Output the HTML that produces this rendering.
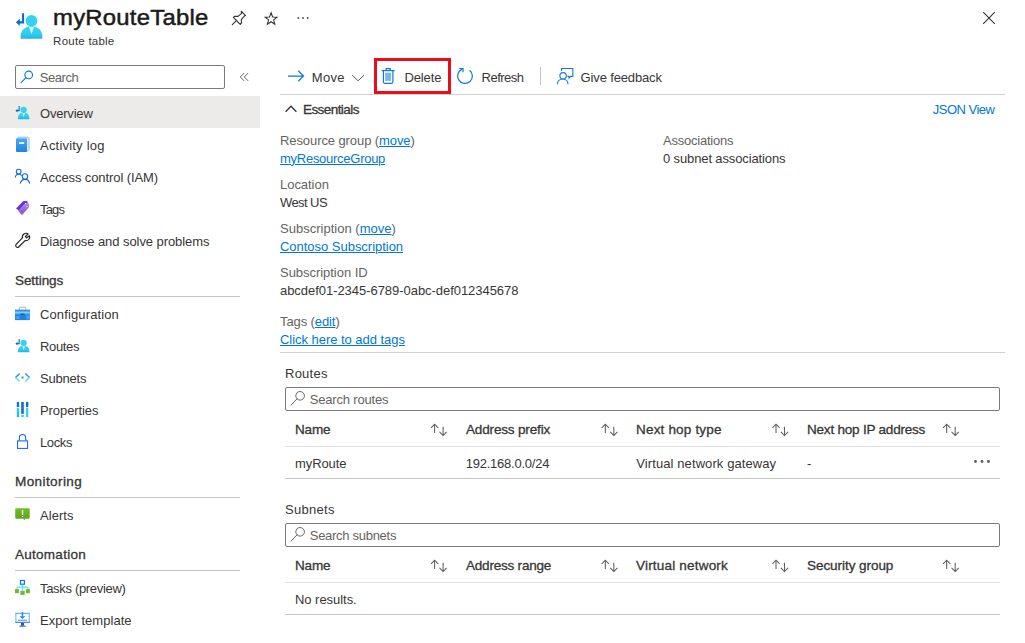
<!DOCTYPE html><html lang="en"><head><meta charset="utf-8"><title>myRouteTable - Route table</title><style>

html,body{margin:0;padding:0;}
body{width:1025px;height:643px;position:relative;overflow:hidden;background:#fff;font-family:"Liberation Sans", sans-serif;color:#373635;}
.t{position:absolute;white-space:nowrap;line-height:1;margin:0;}
.u{color:#0078d4;text-decoration:underline;text-underline-offset:1px;}
.b{position:absolute;box-sizing:border-box;}
svg{position:absolute;overflow:visible;}

</style></head><body>
<div class="b" style="left:0;top:96px;width:260px;height:32px;background:#edebe9"></div>
<div class="b" style="left:15px;top:65px;width:210px;height:24px;border:1px solid #7d7b79;border-radius:2px;background:#fff"></div>
<div class="b" style="left:15px;top:296px;width:225px;height:1px;background:#c8c6c4"></div>
<div class="b" style="left:15px;top:497px;width:225px;height:1px;background:#c8c6c4"></div>
<div class="b" style="left:15px;top:570px;width:225px;height:1px;background:#c8c6c4"></div>
<div class="b" style="left:280px;top:94px;width:725px;height:1px;background:#d2d0ce"></div>
<div class="b" style="left:540px;top:67px;width:1px;height:18px;background:#c8c6c4"></div>
<div class="b" style="left:374px;top:58px;width:77px;height:36px;border:3px solid #e60f1b"></div>
<div class="b" style="left:280px;top:352px;width:725px;height:1px;background:#d2d0ce"></div>
<div class="b" style="left:285px;top:387px;width:715px;height:24px;border:1px solid #7d7b79;border-radius:2px"></div>
<div class="b" style="left:285px;top:446px;width:715px;height:1px;background:#e1dfdd"></div>
<div class="b" style="left:285px;top:478px;width:715px;height:1px;background:#c8c6c4"></div>
<div class="b" style="left:285px;top:523px;width:715px;height:24px;border:1px solid #7d7b79;border-radius:2px"></div>
<div class="b" style="left:285px;top:582px;width:715px;height:1px;background:#e1dfdd"></div>
<div class="b" style="left:285px;top:614px;width:715px;height:1px;background:#c8c6c4"></div>

<div class="t" style="left:52.50px;top:6.75px;font-size:22.5px;font-weight:400;color:#1b1a19;letter-spacing:0.250px;-webkit-text-stroke:0.49px #1b1a19;transform:scaleX(1.06);transform-origin:0 0;">myRouteTable</div>
<div class="t" style="left:53.10px;top:35.97px;font-size:11.5px;font-weight:400;color:#373635;letter-spacing:0.235px;">Route table</div>
<div class="t" style="left:39.80px;top:70.80px;font-size:13px;font-weight:400;color:#656361;letter-spacing:-0.470px;">Search</div>
<div class="t" style="left:40.00px;top:106.90px;font-size:13px;font-weight:400;color:#373635;letter-spacing:-0.200px;">Overview</div>
<div class="t" style="left:40.00px;top:138.90px;font-size:13px;font-weight:400;color:#373635;letter-spacing:0.205px;">Activity log</div>
<div class="t" style="left:40.00px;top:170.90px;font-size:13px;font-weight:400;color:#373635;letter-spacing:-0.097px;">Access control (IAM)</div>
<div class="t" style="left:40.00px;top:202.90px;font-size:13px;font-weight:400;color:#373635;letter-spacing:-0.850px;">Tags</div>
<div class="t" style="left:40.00px;top:234.90px;font-size:13px;font-weight:400;color:#373635;letter-spacing:-0.067px;">Diagnose and solve problems</div>
<div class="t" style="left:40.00px;top:307.90px;font-size:13px;font-weight:400;color:#373635;letter-spacing:0.125px;">Configuration</div>
<div class="t" style="left:40.00px;top:339.90px;font-size:13px;font-weight:400;color:#373635;letter-spacing:-0.350px;">Routes</div>
<div class="t" style="left:40.00px;top:371.90px;font-size:13px;font-weight:400;color:#373635;letter-spacing:-0.208px;">Subnets</div>
<div class="t" style="left:40.00px;top:403.90px;font-size:13px;font-weight:400;color:#373635;letter-spacing:-0.083px;">Properties</div>
<div class="t" style="left:40.00px;top:435.90px;font-size:13px;font-weight:400;color:#373635;letter-spacing:-0.375px;">Locks</div>
<div class="t" style="left:40.00px;top:508.90px;font-size:13px;font-weight:400;color:#373635;letter-spacing:0.050px;">Alerts</div>
<div class="t" style="left:40.00px;top:581.90px;font-size:13px;font-weight:400;color:#373635;letter-spacing:-0.321px;">Tasks (preview)</div>
<div class="t" style="left:40.00px;top:613.90px;font-size:13px;font-weight:400;color:#373635;letter-spacing:0.036px;">Export template</div>
<div class="t" style="left:15.00px;top:273.80px;font-size:13px;font-weight:400;color:#373635;letter-spacing:-0.079px;-webkit-text-stroke:0.29px #373635;transform:scaleX(1.04);transform-origin:0 0;">Settings</div>
<div class="t" style="left:15.00px;top:474.80px;font-size:13px;font-weight:400;color:#373635;letter-spacing:0.389px;-webkit-text-stroke:0.29px #373635;transform:scaleX(1.04);transform-origin:0 0;">Monitoring</div>
<div class="t" style="left:15.00px;top:547.80px;font-size:13px;font-weight:400;color:#373635;letter-spacing:0.250px;-webkit-text-stroke:0.29px #373635;transform:scaleX(1.04);transform-origin:0 0;">Automation</div>
<div class="t" style="left:311.80px;top:70.60px;font-size:13px;font-weight:400;color:#373635;letter-spacing:0.317px;">Move</div>
<div class="t" style="left:404.40px;top:70.60px;font-size:13px;font-weight:400;color:#373635;letter-spacing:-0.120px;">Delete</div>
<div class="t" style="left:481.60px;top:70.60px;font-size:13px;font-weight:400;color:#373635;letter-spacing:-0.517px;">Refresh</div>
<div class="t" style="left:580.60px;top:70.60px;font-size:13px;font-weight:400;color:#373635;letter-spacing:-0.146px;">Give feedback</div>
<div class="t" style="left:302.80px;top:102.70px;font-size:13px;font-weight:400;color:#373635;letter-spacing:-0.556px;-webkit-text-stroke:0.29px #373635;transform:scaleX(1.04);transform-origin:0 0;">Essentials</div>
<div class="t" style="left:932.75px;top:102.70px;font-size:13px;font-weight:400;color:#0078d4;letter-spacing:-0.500px;">JSON View</div>
<div class="t" style="left:280.00px;top:133.60px;font-size:13px;font-weight:400;color:#656361;letter-spacing:-0.087px;">Resource group (<span class="u">move</span>)</div>
<div class="t" style="left:280.00px;top:151.60px;font-size:13px;font-weight:400;color:#0078d4;letter-spacing:-0.268px;text-decoration:underline;text-underline-offset:1px;">myResourceGroup</div>
<div class="t" style="left:280.00px;top:177.60px;font-size:13px;font-weight:400;color:#656361;letter-spacing:-0.036px;">Location</div>
<div class="t" style="left:280.00px;top:195.60px;font-size:13px;font-weight:400;color:#373635;letter-spacing:-0.583px;">West US</div>
<div class="t" style="left:280.00px;top:221.60px;font-size:13px;font-weight:400;color:#656361;letter-spacing:0.014px;">Subscription (<span class="u">move</span>)</div>
<div class="t" style="left:280.00px;top:239.60px;font-size:13px;font-weight:400;color:#0078d4;letter-spacing:-0.026px;text-decoration:underline;text-underline-offset:1px;">Contoso Subscription</div>
<div class="t" style="left:280.00px;top:265.60px;font-size:13px;font-weight:400;color:#656361;letter-spacing:-0.036px;">Subscription ID</div>
<div class="t" style="left:280.00px;top:283.60px;font-size:13px;font-weight:400;color:#373635;letter-spacing:-0.043px;">abcdef01-2345-6789-0abc-def012345678</div>
<div class="t" style="left:280.00px;top:315.00px;font-size:13px;font-weight:400;color:#656361;letter-spacing:-0.100px;">Tags (<span class="u">edit</span>)</div>
<div class="t" style="left:280.00px;top:332.60px;font-size:13px;font-weight:400;color:#0078d4;letter-spacing:-0.036px;text-decoration:underline;text-underline-offset:1px;">Click here to add tags</div>
<div class="t" style="left:663.00px;top:133.60px;font-size:13px;font-weight:400;color:#656361;letter-spacing:-0.227px;">Associations</div>
<div class="t" style="left:663.00px;top:151.60px;font-size:13px;font-weight:400;color:#373635;letter-spacing:-0.125px;">0 subnet associations</div>
<div class="t" style="left:285.00px;top:366.60px;font-size:13px;font-weight:400;color:#373635;letter-spacing:0.250px;">Routes</div>
<div class="t" style="left:309.80px;top:392.70px;font-size:13px;font-weight:400;color:#656361;letter-spacing:-0.188px;">Search routes</div>
<div class="t" style="left:295.00px;top:422.70px;font-size:13px;font-weight:400;color:#373635;letter-spacing:-0.167px;-webkit-text-stroke:0.29px #373635;transform:scaleX(1.04);transform-origin:0 0;">Name</div>
<div class="t" style="left:465.67px;top:422.70px;font-size:13px;font-weight:400;color:#373635;letter-spacing:-0.162px;-webkit-text-stroke:0.29px #373635;transform:scaleX(1.04);transform-origin:0 0;">Address prefix</div>
<div class="t" style="left:636.33px;top:422.70px;font-size:13px;font-weight:400;color:#373635;letter-spacing:0.167px;-webkit-text-stroke:0.29px #373635;transform:scaleX(1.04);transform-origin:0 0;">Next hop type</div>
<div class="t" style="left:807.00px;top:422.70px;font-size:13px;font-weight:400;color:#373635;letter-spacing:-0.208px;-webkit-text-stroke:0.29px #373635;transform:scaleX(1.04);transform-origin:0 0;">Next hop IP address</div>
<div class="t" style="left:295.00px;top:456.70px;font-size:13px;font-weight:400;color:#373635;letter-spacing:-0.083px;">myRoute</div>
<div class="t" style="left:465.67px;top:456.70px;font-size:13px;font-weight:400;color:#373635;letter-spacing:-0.231px;">192.168.0.0/24</div>
<div class="t" style="left:636.33px;top:456.70px;font-size:13px;font-weight:400;color:#373635;letter-spacing:0.091px;">Virtual network gateway</div>
<div class="t" style="left:807.00px;top:456.70px;font-size:13px;font-weight:400;color:#373635;letter-spacing:0.000px;">-</div>
<div class="t" style="left:285.00px;top:502.60px;font-size:13px;font-weight:400;color:#373635;letter-spacing:0.292px;">Subnets</div>
<div class="t" style="left:309.80px;top:528.70px;font-size:13px;font-weight:400;color:#656361;letter-spacing:-0.288px;">Search subnets</div>
<div class="t" style="left:295.00px;top:558.70px;font-size:13px;font-weight:400;color:#373635;letter-spacing:-0.167px;-webkit-text-stroke:0.29px #373635;transform:scaleX(1.04);transform-origin:0 0;">Name</div>
<div class="t" style="left:465.67px;top:558.70px;font-size:13px;font-weight:400;color:#373635;letter-spacing:-0.208px;-webkit-text-stroke:0.29px #373635;transform:scaleX(1.04);transform-origin:0 0;">Address range</div>
<div class="t" style="left:636.33px;top:558.70px;font-size:13px;font-weight:400;color:#373635;letter-spacing:0.179px;-webkit-text-stroke:0.29px #373635;transform:scaleX(1.04);transform-origin:0 0;">Virtual network</div>
<div class="t" style="left:807.00px;top:558.70px;font-size:13px;font-weight:400;color:#373635;letter-spacing:-0.058px;-webkit-text-stroke:0.29px #373635;transform:scaleX(1.04);transform-origin:0 0;">Security group</div>
<div class="t" style="left:295.00px;top:592.90px;font-size:13px;font-weight:400;color:#373635;letter-spacing:-0.040px;">No results.</div>
<svg width="1025" height="643" viewBox="0 0 1025 643" style="left:0;top:0">
<defs>
<linearGradient id="gp" x1="0" y1="0" x2="0" y2="1"><stop offset="0" stop-color="#32d4f5"/><stop offset="0.6" stop-color="#31cdf0"/><stop offset="1" stop-color="#25b4dc"/></linearGradient>
<linearGradient id="gb" x1="0" y1="0" x2="0" y2="1"><stop offset="0" stop-color="#4ba9ee"/><stop offset="1" stop-color="#1b86dc"/></linearGradient>
<linearGradient id="gt" x1="0" y1="0" x2="0" y2="1"><stop offset="0" stop-color="#b48be0"/><stop offset="1" stop-color="#8252cc"/></linearGradient>
<linearGradient id="gg" x1="0" y1="0" x2="0" y2="1"><stop offset="0" stop-color="#6fc026"/><stop offset="1" stop-color="#5ba51f"/></linearGradient>
<linearGradient id="gc" x1="0" y1="0" x2="0" y2="1"><stop offset="0" stop-color="#32d4f5"/><stop offset="1" stop-color="#1fb4dc"/></linearGradient>
</defs>
<g transform="translate(15.9,13.15) scale(1,1) translate(-15.9,-13.15)">
<path d="M22 13.15h2.1v10.3h-4.3v2.5l-3.9-3.6 3.9-3.6v2.5h2.2z" fill="#0b6bd0"/>
<circle cx="31.5" cy="20.85" r="5.85" fill="#32d2f3"/>
<path d="M20.6 36.6c0-5.2 3.6-9.4 8.3-10.1h5.2c4.7 0.7 8.3 4.9 8.3 10.1v1.1c0 0.6-0.5 1-1 1h-19.8c-0.6 0-1-0.4-1-1z" fill="url(#gp)"/>
<path d="M29 26.9h5l-2.5 7.4z" fill="#d4f4fc"/>
</g>
<g transform="translate(15.4,105.9) scale(0.53,0.52) translate(-15.9,-13.15)">
<path d="M22 13.15h2.1v10.3h-4.3v2.5l-3.9-3.6 3.9-3.6v2.5h2.2z" fill="#0b6bd0"/>
<circle cx="31.5" cy="20.85" r="5.85" fill="#32d2f3"/>
<path d="M20.6 36.6c0-5.2 3.6-9.4 8.3-10.1h5.2c4.7 0.7 8.3 4.9 8.3 10.1v1.1c0 0.6-0.5 1-1 1h-19.8c-0.6 0-1-0.4-1-1z" fill="url(#gp)"/>
<path d="M29 26.9h5l-2.5 7.4z" fill="#d4f4fc"/>
</g>
<g transform="translate(15.4,338.9) scale(0.53,0.52) translate(-15.9,-13.15)">
<path d="M22 13.15h2.1v10.3h-4.3v2.5l-3.9-3.6 3.9-3.6v2.5h2.2z" fill="#0b6bd0"/>
<circle cx="31.5" cy="20.85" r="5.85" fill="#32d2f3"/>
<path d="M20.6 36.6c0-5.2 3.6-9.4 8.3-10.1h5.2c4.7 0.7 8.3 4.9 8.3 10.1v1.1c0 0.6-0.5 1-1 1h-19.8c-0.6 0-1-0.4-1-1z" fill="url(#gp)"/>
<path d="M29 26.9h5l-2.5 7.4z" fill="#d4f4fc"/>
</g>
<g fill="none" stroke="#323130" stroke-width="1.1" stroke-linejoin="round" stroke-linecap="round">
<path d="M232.3 24.7l4.3-4.3"/>
<path d="M241.2 11.2l4.4 4.4-1.3 0.5-3 3.6 0.2 3.2-1.2 1.4-6.9-6.9 1.4-1.2 3.2 0.2 3.6-3z"/>
</g>
<polygon points="271.10,12.80 272.66,16.96 277.09,17.15 273.62,19.92 274.80,24.20 271.10,21.75 267.40,24.20 268.58,19.92 265.11,17.15 269.54,16.96" fill="none" stroke="#323130" stroke-width="1.05" stroke-linejoin="miter"/>
<rect x="297.65" y="17.2" width="1.5" height="1.6" fill="#323130"/>
<rect x="302.25" y="17.2" width="1.5" height="1.6" fill="#323130"/>
<rect x="306.95" y="17.2" width="1.5" height="1.6" fill="#323130"/>
<path d="M983.2 12.2l11.6 11.6M994.8 12.2l-11.6 11.6" stroke="#323130" stroke-width="1.05" fill="none"/>
<g fill="none" stroke="#0f7ad8" stroke-width="1.15"><circle cx="28.7" cy="74.9" r="3.8"/><path d="M26 77.6l-4.9 5" stroke-linecap="round"/></g>
<path d="M244.2 73l-3.9 3.95 3.9 3.95M248.2 73l-3.9 3.95 3.9 3.95" fill="none" stroke="#605e5c" stroke-width="0.95"/>
<path d="M288 76h15.5M298.2 70.8l5.3 5.2-5.3 5.2" fill="none" stroke="#0f7ad8" stroke-width="1.25"/>
<path d="M352.2 75.2l5.9 5.6 5.9-5.6" fill="none" stroke="#605e5c" stroke-width="1"/>
<g fill="none" stroke="#0f7ad8" stroke-width="1.2">
<path d="M381.6 70.6h13.1"/><path d="M386.1 70.4v-1.7h4.1v1.7"/>
<path d="M383.4 70.8v11.3c0 0.7 0.5 1.2 1.2 1.2h7.1c0.7 0 1.2-0.5 1.2-1.2v-11.3"/>
</g><rect x="385.1" y="72.7" width="6" height="8.2" fill="#7ab8ec"/>
<g fill="none" stroke="#0f7ad8" stroke-width="1.2"><path d="M469.56 70.17A7.4 7.4 0 1 1 462.23 69.14"/><path d="M459.2 68.5h3.8v3.8"/></g>
<g fill="none" stroke="#0f7ad8" stroke-width="1.1">
<circle cx="563.1" cy="75.8" r="3.2"/>
<path d="M557.4 84.2c0-3.2 2.400-5.200 5.300-5.200s5.300 2 5.300 5.200"/>
<path d="M561.6 71v-2.5h11.2v7.9h-2.2l-1.6 1.7v-1.7h-1.6"/>
</g>
<path d="M285.6 111.7l5.4-5.5 5.4 5.5" fill="none" stroke="#323130" stroke-width="1.3"/>
<path d="M17.6 137.2h9.9l1.5 1v11.3l-1.6 2" fill="#fff" stroke="#6aa5dc" stroke-width="0.8"/>
<rect x="16" y="138.3" width="11.2" height="13.7" rx="1" fill="url(#gb)"/>
<rect x="19.1" y="142.2" width="5.1" height="1.7" fill="#fff"/>
<g fill="none" stroke="#0f6ad8" stroke-width="1.1">
<circle cx="18.7" cy="171.6" r="2.35"/>
<path d="M15.4 177.6c0-1.900 1.400-3.300 3.300-3.300 1.300 0 2.400 0.600 3 1.500"/>
<circle cx="25" cy="176.5" r="2.7"/>
<path d="M20.3 183.7c0.4-2.6 2.2-4.3 4.7-4.3s4.3 1.7 4.7 4.3"/>
</g>
<path d="M16 208.6l6.9-7.1c0.3-0.3 0.6-0.4 1-0.4h2.4c0.7 0 1.2 0.5 1.3 1.1l0.3 2-7 7.6z" fill="#6b2fd9"/>
<path d="M18.1 210.8l6.8-7.3c0.3-0.3 0.6-0.4 1-0.4l2 0.1c0.6 0 1.1 0.5 1.2 1.1l0.1 2.1c0 0.4-0.1 0.7-0.4 1l-6 6.9c-0.4 0.5-1.1 0.5-1.500 0.100z" fill="url(#gt)"/>
<circle cx="25.6" cy="203.5" r="0.65" fill="#fff"/><ellipse cx="27.1" cy="206.4" rx="0.8" ry="0.5" fill="#e9defa"/>
<path d="M22.430 237.960A3.700 3.700 0 0 1 28.120 233.970L25.400 236.300 26.600 237.800 29.480 235.730A3.700 3.700 0 0 1 25.040 240.570L18.700 247A1.850 1.850 0 0 1 16.100 244.400Z" fill="none" stroke="#1b1a19" stroke-width="1.100" stroke-linejoin="round"/>
<path d="M19.4 310v-2.300c0-0.300 0.200-0.500 0.500-0.500h5.400c0.300 0 0.500 0.200 0.500 0.500v2.300" fill="none" stroke="#a19f9d" stroke-width="0.8"/>
<rect x="15" y="309.800" width="14.900" height="10.300" fill="#1b84e2"/>
<rect x="15" y="309.800" width="14.900" height="2" fill="#3a8de8"/>
<rect x="15" y="311.500" width="14.900" height="2.200" fill="#80d2fb"/>
<rect x="15" y="313.700" width="14.900" height="1.300" fill="#3597ec"/>
<rect x="15.600" y="316" width="4" height="3" fill="#4ea0ee"/><rect x="26.300" y="315.300" width="3.600" height="4" fill="#4ea0ee"/>
<ellipse cx="22.450" cy="314.200" rx="2.400" ry="0.800" fill="#0a57a6"/>
<g fill="none" stroke-width="1.35">
<path d="M19.7 373.400l-4.200 4.100" stroke="#1e90e8"/><path d="M15.500 377.500l4.200 4.100" stroke="#50e0fc"/>
<path d="M25.200 373.400l4.300 4.100" stroke="#1e90e8"/><path d="M29.500 377.500l-4.300 4.100" stroke="#50e0fc"/>
</g><circle cx="22.500" cy="377.500" r="1.250" fill="#76bc2d"/>
<rect x="16.800" y="401.900" width="2.300" height="5.200" fill="#0f6cd8"/><rect x="16.800" y="407.900" width="2.300" height="9.200" fill="url(#gc)"/>
<rect x="21.200" y="401.900" width="2.600" height="12" fill="#0f6cd8"/><rect x="21.200" y="414.800" width="2.600" height="2.300" fill="#32d4f5"/>
<rect x="26" y="401.900" width="2.300" height="5.200" fill="#0f6cd8"/><rect x="26" y="407.900" width="2.300" height="9.200" fill="#32d4f5"/>
<g fill="none" stroke="#1466dc" stroke-width="1.05">
<rect x="17.550" y="440.850" width="10.050" height="7.550"/>
<path d="M19.400 440.800v-3.200c0-1.750 1.400-3.150 3.150-3.150s3.150 1.400 3.150 3.150v3.200"/>
</g><rect x="18" y="440.400" width="9.300" height="1" fill="#6fa4ea" opacity="0.6"/>
<rect x="15.200" y="508.250" width="14.500" height="10.400" rx="0.800" fill="url(#gg)"/>
<path d="M23 518.400h2.300l-0.700 1.900z" fill="#5ba51f"/>
<rect x="21.900" y="510" width="1.300" height="5.100" rx="0.500" fill="#fff"/><rect x="21.950" y="516.100" width="1.200" height="1" fill="#fff"/>
<g fill="none" stroke="#50e6ff" stroke-width="1.2"><path d="M22.450 584.800v6.400"/><path d="M16.950 589.300v-1c0-0.700 0.500-1.200 1.200-1.200h8.700c0.700 0 1.200 0.500 1.200 1.200v1"/></g>
<rect x="20.500" y="580.500" width="3.900" height="3.700" fill="#fff" stroke="#0f78d4" stroke-width="1.200"/>
<rect x="15" y="589.100" width="3.900" height="4.100" fill="#70b928"/><rect x="20.400" y="591" width="4.300" height="3.900" fill="#70b928"/><rect x="26" y="589.100" width="3.900" height="4.100" fill="#70b928"/>
<rect x="15.900" y="613.400" width="13.300" height="9" fill="#fff" stroke="#62b2f1" stroke-width="1"/>
<rect x="15.400" y="621.800" width="14.300" height="1.100" fill="#2b94e8"/>
<rect x="15.400" y="612.900" width="14.300" height="0.900" fill="#5eb0f0"/>
<path d="M21.700 612h1.500v4.300h2.300l-3.050 2.700-3.050-2.700h2.300z" fill="#1e90f0"/>
<rect x="18.200" y="619.600" width="8.700" height="1.300" fill="#9a9896"/>
<rect x="21.100" y="622.900" width="2.800" height="2.600" fill="#1450a8"/>
<path d="M20.600 625.300h3.800l1.700 1.400h-7.200z" fill="#3f6dbc"/>
<g fill="none" stroke="#605e5c" stroke-width="0.95"><circle cx="300.100" cy="395.8" r="4.300"/><path d="M297 398.90000000000003l-5.800 6" stroke-linecap="round"/></g>
<g fill="none" stroke="#605e5c" stroke-width="0.95"><circle cx="300.100" cy="531.8" r="4.300"/><path d="M297 534.9l-5.800 6" stroke-linecap="round"/></g>
<path d="M434.60 433.1v-8.800M431.00 427.90000000000003l3.600-3.700 3.600 3.700M443.10 426.8v8.800M439.50 431.90000000000003l3.600 3.700 3.600-3.700" fill="none" stroke="#605e5c" stroke-width="1.05"/>
<path d="M605.30 433.1v-8.800M601.70 427.90000000000003l3.600-3.700 3.600 3.700M613.80 426.8v8.800M610.20 431.90000000000003l3.600 3.700 3.600-3.700" fill="none" stroke="#605e5c" stroke-width="1.05"/>
<path d="M776.00 433.1v-8.800M772.40 427.90000000000003l3.600-3.700 3.600 3.700M784.50 426.8v8.800M780.90 431.90000000000003l3.600 3.700 3.600-3.700" fill="none" stroke="#605e5c" stroke-width="1.05"/>
<path d="M946.70 433.1v-8.800M943.10 427.90000000000003l3.600-3.700 3.600 3.700M955.20 426.8v8.800M951.60 431.90000000000003l3.600 3.700 3.600-3.700" fill="none" stroke="#605e5c" stroke-width="1.05"/>
<path d="M434.60 569.1v-8.800M431.00 563.9l3.600-3.700 3.600 3.700M443.10 562.8000000000001v8.800M439.50 567.9l3.600 3.700 3.600-3.700" fill="none" stroke="#605e5c" stroke-width="1.05"/>
<path d="M605.30 569.1v-8.800M601.70 563.9l3.600-3.700 3.600 3.700M613.80 562.8000000000001v8.800M610.20 567.9l3.600 3.700 3.600-3.700" fill="none" stroke="#605e5c" stroke-width="1.05"/>
<path d="M776.00 569.1v-8.800M772.40 563.9l3.600-3.700 3.600 3.700M784.50 562.8000000000001v8.800M780.90 567.9l3.600 3.700 3.600-3.700" fill="none" stroke="#605e5c" stroke-width="1.05"/>
<path d="M946.70 569.1v-8.800M943.10 563.9l3.600-3.700 3.600 3.700M955.20 562.8000000000001v8.800M951.60 567.9l3.600 3.700 3.600-3.700" fill="none" stroke="#605e5c" stroke-width="1.05"/>
<circle cx="975.5" cy="461.500" r="1.450" fill="#605e5c"/>
<circle cx="982.0" cy="461.500" r="1.450" fill="#605e5c"/>
<circle cx="988.4" cy="461.500" r="1.450" fill="#605e5c"/>
</svg>
</body></html>
